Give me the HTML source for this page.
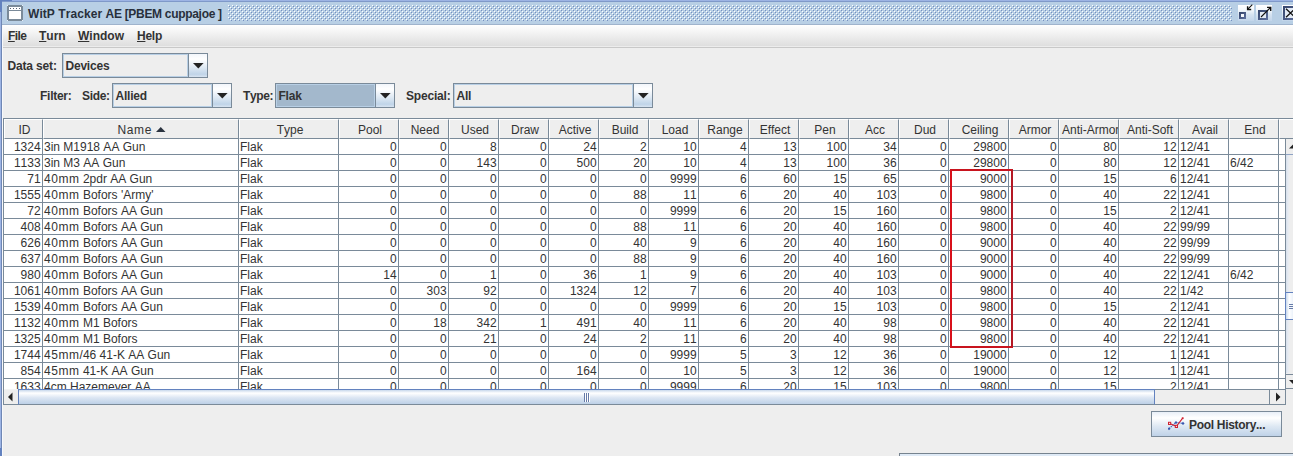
<!DOCTYPE html>
<html lang="en"><head><meta charset="utf-8"><title>WitP Tracker AE</title>
<style>
html,body{margin:0;padding:0}
body{font-kerning:none;width:1293px;height:456px;overflow:hidden;background:#eee;font-family:"Liberation Sans",sans-serif;font-size:12px;color:#333;position:relative}
#root{position:absolute;left:0;top:0;width:1293px;height:456px;overflow:hidden;background:#eee}
.abs{position:absolute}
b,.b{font-weight:bold}
/* frame border */
#bl{left:0;top:0;width:1px;height:456px;background:#9db4e4}
#bl2{left:1px;top:0;width:1px;height:456px;background:#6f87b5}
#bl3{left:2px;top:25px;width:1px;height:432px;background:#f8f9fb}
#bt{left:0;top:0;width:1293px;height:1px;background:#9db4e4}
#bt2{left:0;top:1px;width:1293px;height:1px;background:#7f99c9}
#ctl{left:0;top:0;width:2px;height:12px;background:#6382bf}
#ctl2{left:0;top:0;width:12px;height:1px;background:#6382bf}
#cbl{left:0;top:448px;width:2px;height:8px;background:#6382bf}
/* title bar */
#title{left:2px;top:2px;width:1291px;height:22px;background:#b8cfe5}
#titleline{left:2px;top:24px;width:1291px;height:1px;background:#9fb3cc}
#ttext{left:28px;top:6px;font-weight:bold;font-size:12px;color:#28303c;white-space:nowrap;line-height:16px}
#bumps{left:228px;top:5px;width:1004px;height:16px}
/* menubar */
#menubar{left:3px;top:25px;width:1290px;height:21px;background:linear-gradient(#fff,#dedede)}
#menuline{left:3px;top:46px;width:1290px;height:2px;background:linear-gradient(#ececec 50%,#c8c8c8 50%)}
.mi{top:28px;font-weight:bold;line-height:16px;white-space:nowrap}
.mi u{text-decoration:underline;text-underline-offset:1px}
.lbl{font-weight:bold;line-height:16px;white-space:nowrap}
/* combo */
.combo{box-sizing:border-box;border:1px solid #7a8a99;height:25px;background:#eee}
.combo .in{position:absolute;left:0;top:0;right:19px;bottom:0;border:1px solid #b8cfe5;box-sizing:border-box}
.combo .txt{position:absolute;left:2.500px;top:4px;font-weight:bold;line-height:16px;letter-spacing:-0.22px}
.combo .btn{position:absolute;right:0;top:0;width:19px;height:23px;border-left:1px solid #7a8a99;background:linear-gradient(#f2f6fb 0%,#fff 22%,#dde8f3 60%,#c0d4e8 88%,#d8e4f1 100%);box-sizing:border-box}
.combo .btn svg{position:absolute;left:4px;top:9px}
.combo.sel .in{background:#a3b8cc}
/* table */
#tbl{position:absolute;left:3px;top:118px;width:1290px;height:272px;overflow:hidden;border-left:1px solid #7a8a99;border-top:1px solid #7a8a99;box-sizing:border-box}
#thead{position:absolute;left:0;top:0;width:1290px;height:20px;background:#eee}
.th{position:absolute;top:0;height:20px;box-sizing:border-box;border-right:1px solid #7a8a99;border-bottom:1px solid #7a8a99;border-left:1px solid #fff;border-top:1px solid #fff;background:#eee;text-align:center;line-height:19px;white-space:nowrap;overflow:hidden;padding-left:2px}
.th span{position:relative;top:1px}
.mm{letter-spacing:0.55px}
.th .sort{margin-left:4.500px;position:relative;top:-1.500px}
#tbody{position:absolute;left:0;top:20px;width:1281px;height:251px;overflow:hidden;background:#fff}
.tr{position:absolute;left:0;width:1281px;height:16px;border-bottom:1px solid #7a8a99;box-sizing:border-box}
.td{position:absolute;top:0;height:16px;box-sizing:border-box;border-right:1px solid #7a8a99;border-bottom:1px solid #7a8a99;text-align:right;line-height:17px;white-space:nowrap;overflow:hidden;padding-right:1.400px}
.td.l{text-align:left;padding-left:1px}
#redbox{position:absolute;left:946px;top:30px;width:63px;height:179px;border:2px solid #c8141e;border-left-color:#d8101a;border-right-color:#b41824;box-sizing:border-box}
/* scrollbars */
#vsb{left:1285px;top:139px;width:8px;height:250px;background:#eee;border-left:1px solid #7a8a99;box-sizing:border-box}
#hsb{left:3px;top:389px;width:1283px;height:16px;background:#eee;border:1px solid #7a8a99;box-sizing:border-box}
.thumbh{background:linear-gradient(#c8d8ec 0%,#fff 22%,#dce6f3 55%,#bdd0e7 100%)}

</style></head>
<body>
<div id="root">
<div class="abs" id="title"></div>
<div class="abs" id="titleline"></div>
<div class="abs" id="bt"></div><div class="abs" id="bt2"></div>
<div class="abs" id="bl"></div><div class="abs" id="bl2"></div><div class="abs" id="bl3"></div>
<div class="abs" id="ctl"></div><div class="abs" id="ctl2"></div><div class="abs" id="cbl"></div>
<svg class="abs" id="ficon" style="left:7px;top:5px" width="16" height="16" viewBox="0 0 16 16">
<rect x="1" y="1" width="14" height="14" fill="#fff" stroke="#7a8a99" stroke-width="2"/>
<rect x="2" y="5" width="12" height="1" fill="#7a8a99"/>
<rect x="0" y="0" width="1" height="1" fill="#e6eef8"/><rect x="15" y="0" width="1" height="1" fill="#e6eef8"/><rect x="0" y="15" width="1" height="1" fill="#e6eef8"/><rect x="15" y="15" width="1" height="1" fill="#e6eef8"/>
<rect x="3" y="3" width="1" height="1" fill="#5a6578"/><rect x="6" y="3" width="1" height="1" fill="#5a6578"/><rect x="9" y="3" width="1" height="1" fill="#5a6578"/><rect x="12" y="3" width="1" height="1" fill="#5a6578"/>
</svg>
<div class="abs" id="ttext"><span style="letter-spacing:0.07px">WitP Tracker </span><span style="letter-spacing:-0.31px">AE [PBEM cuppajoe ]</span></div>
<svg class="abs" id="bumps" width="1004" height="16">
<defs><pattern id="bp" x="0" y="0" width="4" height="4" patternUnits="userSpaceOnUse">
<rect x="0" y="0" width="1" height="1" fill="#fff"/><rect x="2" y="2" width="1" height="1" fill="#fff"/>
<rect x="1" y="1" width="1" height="1" fill="#7690c0"/><rect x="3" y="3" width="1" height="1" fill="#7690c0"/>
</pattern></defs>
<rect width="1004" height="16" fill="url(#bp)"/></svg>
<!-- title buttons -->
<svg class="abs" style="left:1233px;top:0px" width="60" height="24" viewBox="1233 0 60 24">
<defs><linearGradient id="bg1" x1="0" y1="0" x2="0" y2="1"><stop offset="0" stop-color="#fff"/><stop offset="0.3" stop-color="#f4f8fc"/><stop offset="0.6" stop-color="#d6e3f1"/><stop offset="1" stop-color="#c2d5ea"/></linearGradient>
<linearGradient id="sq" x1="0" y1="0" x2="1" y2="1"><stop offset="0" stop-color="#38486f"/><stop offset="1" stop-color="#5a6c9a"/></linearGradient></defs>
<rect x="1238" y="5" width="16" height="16" fill="url(#bg1)"/>
<rect x="1240" y="13" width="5" height="5" fill="#f4f7fc" stroke="url(#sq)" stroke-width="2"/>
<path d="M1252.300 4.700 L1247.800 9.200" stroke="#111" stroke-width="1.100" fill="none"/><path d="M1247.600 6.200 V9.500 H1251.200" stroke="#111" stroke-width="1.400" fill="none"/>
<rect x="1256" y="5" width="16" height="16" fill="url(#bg1)"/>
<rect x="1259" y="11" width="8" height="8" fill="#e3ebf6" stroke="url(#sq)" stroke-width="2"/>
<path d="M1261 17 L1270.500 7.500" stroke="#111" stroke-width="1.100" fill="none"/><path d="M1267 7.400 H1270.700 V11" stroke="#111" stroke-width="1.400" fill="none"/>
<rect x="1282" y="5" width="16" height="16" fill="url(#bg1)"/>
<rect x="1284" y="7" width="13" height="12" fill="#e3ebf6" stroke="url(#sq)" stroke-width="2"/>
<path d="M1286 8.800 L1295 17.300 M1295 8.800 L1286 17.300" stroke="#111" stroke-width="1.300" fill="none"/>
</svg>
<div class="abs" id="menubar"></div><div class="abs" id="menuline"></div>
<div class="abs mi" style="left:8px;letter-spacing:-0.55px"><u>F</u>ile</div>
<div class="abs mi" style="left:39px"><u>T</u>urn</div>
<div class="abs mi" style="left:78px"><u>W</u>indow</div>
<div class="abs mi" style="left:137px;letter-spacing:-0.25px"><u>H</u>elp</div>
<div class="abs lbl" style="left:7.500px;top:58px;letter-spacing:-0.16px">Data set:</div>
<div class="abs combo" style="left:62px;top:53px;width:146px"><div class="in"></div><div class="txt">Devices</div><div class="btn"><svg width="11" height="6" viewBox="0 0 11 6"><polygon points="0,0 10.600,0 5.300,5.500" fill="#222"/></svg></div></div>
<div class="abs lbl" style="left:40px;top:88px;letter-spacing:-0.26px">Filter:</div>
<div class="abs lbl" style="left:82px;top:88px;letter-spacing:-0.34px">Side:</div>
<div class="abs combo" style="left:112px;top:83px;width:120px"><div class="in"></div><div class="txt">Allied</div><div class="btn"><svg width="11" height="6" viewBox="0 0 11 6"><polygon points="0,0 10.600,0 5.300,5.500" fill="#222"/></svg></div></div>
<div class="abs lbl" style="left:243px;top:88px;letter-spacing:-0.4px">Type:</div>
<div class="abs combo sel" style="left:275px;top:83px;width:120px"><div class="in"></div><div class="txt">Flak</div><div class="btn"><svg width="11" height="6" viewBox="0 0 11 6"><polygon points="0,0 10.600,0 5.300,5.500" fill="#222"/></svg></div></div>
<div class="abs lbl" style="left:406px;top:88px;letter-spacing:-0.19px">Special:</div>
<div class="abs combo" style="left:453px;top:83px;width:200px"><div class="in"></div><div class="txt">All</div><div class="btn"><svg width="11" height="6" viewBox="0 0 11 6"><polygon points="0,0 10.600,0 5.300,5.500" fill="#222"/></svg></div></div>
<div id="tbl">
<div id="thead"><div class="th" style="left:0px;width:39px"><span>ID</span></div><div class="th" style="left:39px;width:196px"><span style="letter-spacing:0.6px">Name</span><svg class="sort" width="10" height="5" viewBox="0 0 10 5"><polygon points="0,5 4.750,0 9.500,5" fill="#2a3340"/></svg></div><div class="th" style="left:235px;width:100px"><span>Type</span></div><div class="th" style="left:335px;width:60px"><span>Pool</span></div><div class="th" style="left:395px;width:50px"><span>Need</span></div><div class="th" style="left:445px;width:50px"><span>Used</span></div><div class="th" style="left:495px;width:50px"><span>Draw</span></div><div class="th" style="left:545px;width:50px"><span>Active</span></div><div class="th" style="left:595px;width:50px"><span>Build</span></div><div class="th" style="left:645px;width:50px"><span>Load</span></div><div class="th" style="left:695px;width:50px"><span>Range</span></div><div class="th" style="left:745px;width:50px"><span>Effect</span></div><div class="th" style="left:795px;width:50px"><span>Pen</span></div><div class="th" style="left:845px;width:50px"><span>Acc</span></div><div class="th" style="left:895px;width:50px"><span>Dud</span></div><div class="th" style="left:945px;width:60px"><span>Ceiling</span></div><div class="th" style="left:1005px;width:50px"><span>Armor</span></div><div class="th" style="left:1055px;width:60px"><span>Anti-Armor</span></div><div class="th" style="left:1115px;width:60px"><span>Anti-Soft</span></div><div class="th" style="left:1175px;width:50px"><span>Avail</span></div><div class="th" style="left:1225px;width:50px"><span>End</span></div><div class="th" style="left:1275px;width:20px;border-right:none"></div></div>
<div id="tbody">
<div class="tr" style="top:0px"><div class="td" style="left:0px;width:39px">1324</div><div class="td l" style="left:39px;width:196px">3in M1918 AA Gun</div><div class="td l" style="left:235px;width:100px">Flak</div><div class="td" style="left:335px;width:60px">0</div><div class="td" style="left:395px;width:50px">0</div><div class="td" style="left:445px;width:50px">8</div><div class="td" style="left:495px;width:50px">0</div><div class="td" style="left:545px;width:50px">24</div><div class="td" style="left:595px;width:50px">2</div><div class="td" style="left:645px;width:50px">10</div><div class="td" style="left:695px;width:50px">4</div><div class="td" style="left:745px;width:50px">13</div><div class="td" style="left:795px;width:50px">100</div><div class="td" style="left:845px;width:50px">34</div><div class="td" style="left:895px;width:50px">0</div><div class="td" style="left:945px;width:60px">29800</div><div class="td" style="left:1005px;width:50px">0</div><div class="td" style="left:1055px;width:60px">80</div><div class="td" style="left:1115px;width:60px">12</div><div class="td l" style="left:1175px;width:50px">12/41</div><div class="td l" style="left:1225px;width:50px"></div></div>
<div class="tr" style="top:16px"><div class="td" style="left:0px;width:39px">1133</div><div class="td l" style="left:39px;width:196px">3in M3 AA Gun</div><div class="td l" style="left:235px;width:100px">Flak</div><div class="td" style="left:335px;width:60px">0</div><div class="td" style="left:395px;width:50px">0</div><div class="td" style="left:445px;width:50px">143</div><div class="td" style="left:495px;width:50px">0</div><div class="td" style="left:545px;width:50px">500</div><div class="td" style="left:595px;width:50px">20</div><div class="td" style="left:645px;width:50px">10</div><div class="td" style="left:695px;width:50px">4</div><div class="td" style="left:745px;width:50px">13</div><div class="td" style="left:795px;width:50px">100</div><div class="td" style="left:845px;width:50px">36</div><div class="td" style="left:895px;width:50px">0</div><div class="td" style="left:945px;width:60px">29800</div><div class="td" style="left:1005px;width:50px">0</div><div class="td" style="left:1055px;width:60px">80</div><div class="td" style="left:1115px;width:60px">12</div><div class="td l" style="left:1175px;width:50px">12/41</div><div class="td l" style="left:1225px;width:50px">6/42</div></div>
<div class="tr" style="top:32px"><div class="td" style="left:0px;width:39px">71</div><div class="td l" style="left:39px;width:196px"><span class="mm">40mm</span> 2pdr AA Gun</div><div class="td l" style="left:235px;width:100px">Flak</div><div class="td" style="left:335px;width:60px">0</div><div class="td" style="left:395px;width:50px">0</div><div class="td" style="left:445px;width:50px">0</div><div class="td" style="left:495px;width:50px">0</div><div class="td" style="left:545px;width:50px">0</div><div class="td" style="left:595px;width:50px">0</div><div class="td" style="left:645px;width:50px">9999</div><div class="td" style="left:695px;width:50px">6</div><div class="td" style="left:745px;width:50px">60</div><div class="td" style="left:795px;width:50px">15</div><div class="td" style="left:845px;width:50px">65</div><div class="td" style="left:895px;width:50px">0</div><div class="td" style="left:945px;width:60px">9000</div><div class="td" style="left:1005px;width:50px">0</div><div class="td" style="left:1055px;width:60px">15</div><div class="td" style="left:1115px;width:60px">6</div><div class="td l" style="left:1175px;width:50px">12/41</div><div class="td l" style="left:1225px;width:50px"></div></div>
<div class="tr" style="top:48px"><div class="td" style="left:0px;width:39px">1555</div><div class="td l" style="left:39px;width:196px"><span class="mm">40mm</span> Bofors 'Army'</div><div class="td l" style="left:235px;width:100px">Flak</div><div class="td" style="left:335px;width:60px">0</div><div class="td" style="left:395px;width:50px">0</div><div class="td" style="left:445px;width:50px">0</div><div class="td" style="left:495px;width:50px">0</div><div class="td" style="left:545px;width:50px">0</div><div class="td" style="left:595px;width:50px">88</div><div class="td" style="left:645px;width:50px">11</div><div class="td" style="left:695px;width:50px">6</div><div class="td" style="left:745px;width:50px">20</div><div class="td" style="left:795px;width:50px">40</div><div class="td" style="left:845px;width:50px">103</div><div class="td" style="left:895px;width:50px">0</div><div class="td" style="left:945px;width:60px">9800</div><div class="td" style="left:1005px;width:50px">0</div><div class="td" style="left:1055px;width:60px">40</div><div class="td" style="left:1115px;width:60px">22</div><div class="td l" style="left:1175px;width:50px">12/41</div><div class="td l" style="left:1225px;width:50px"></div></div>
<div class="tr" style="top:64px"><div class="td" style="left:0px;width:39px">72</div><div class="td l" style="left:39px;width:196px"><span class="mm">40mm</span> Bofors AA Gun</div><div class="td l" style="left:235px;width:100px">Flak</div><div class="td" style="left:335px;width:60px">0</div><div class="td" style="left:395px;width:50px">0</div><div class="td" style="left:445px;width:50px">0</div><div class="td" style="left:495px;width:50px">0</div><div class="td" style="left:545px;width:50px">0</div><div class="td" style="left:595px;width:50px">0</div><div class="td" style="left:645px;width:50px">9999</div><div class="td" style="left:695px;width:50px">6</div><div class="td" style="left:745px;width:50px">20</div><div class="td" style="left:795px;width:50px">15</div><div class="td" style="left:845px;width:50px">160</div><div class="td" style="left:895px;width:50px">0</div><div class="td" style="left:945px;width:60px">9800</div><div class="td" style="left:1005px;width:50px">0</div><div class="td" style="left:1055px;width:60px">15</div><div class="td" style="left:1115px;width:60px">2</div><div class="td l" style="left:1175px;width:50px">12/41</div><div class="td l" style="left:1225px;width:50px"></div></div>
<div class="tr" style="top:80px"><div class="td" style="left:0px;width:39px">408</div><div class="td l" style="left:39px;width:196px"><span class="mm">40mm</span> Bofors AA Gun</div><div class="td l" style="left:235px;width:100px">Flak</div><div class="td" style="left:335px;width:60px">0</div><div class="td" style="left:395px;width:50px">0</div><div class="td" style="left:445px;width:50px">0</div><div class="td" style="left:495px;width:50px">0</div><div class="td" style="left:545px;width:50px">0</div><div class="td" style="left:595px;width:50px">88</div><div class="td" style="left:645px;width:50px">11</div><div class="td" style="left:695px;width:50px">6</div><div class="td" style="left:745px;width:50px">20</div><div class="td" style="left:795px;width:50px">40</div><div class="td" style="left:845px;width:50px">160</div><div class="td" style="left:895px;width:50px">0</div><div class="td" style="left:945px;width:60px">9800</div><div class="td" style="left:1005px;width:50px">0</div><div class="td" style="left:1055px;width:60px">40</div><div class="td" style="left:1115px;width:60px">22</div><div class="td l" style="left:1175px;width:50px">99/99</div><div class="td l" style="left:1225px;width:50px"></div></div>
<div class="tr" style="top:96px"><div class="td" style="left:0px;width:39px">626</div><div class="td l" style="left:39px;width:196px"><span class="mm">40mm</span> Bofors AA Gun</div><div class="td l" style="left:235px;width:100px">Flak</div><div class="td" style="left:335px;width:60px">0</div><div class="td" style="left:395px;width:50px">0</div><div class="td" style="left:445px;width:50px">0</div><div class="td" style="left:495px;width:50px">0</div><div class="td" style="left:545px;width:50px">0</div><div class="td" style="left:595px;width:50px">40</div><div class="td" style="left:645px;width:50px">9</div><div class="td" style="left:695px;width:50px">6</div><div class="td" style="left:745px;width:50px">20</div><div class="td" style="left:795px;width:50px">40</div><div class="td" style="left:845px;width:50px">160</div><div class="td" style="left:895px;width:50px">0</div><div class="td" style="left:945px;width:60px">9000</div><div class="td" style="left:1005px;width:50px">0</div><div class="td" style="left:1055px;width:60px">40</div><div class="td" style="left:1115px;width:60px">22</div><div class="td l" style="left:1175px;width:50px">99/99</div><div class="td l" style="left:1225px;width:50px"></div></div>
<div class="tr" style="top:112px"><div class="td" style="left:0px;width:39px">637</div><div class="td l" style="left:39px;width:196px"><span class="mm">40mm</span> Bofors AA Gun</div><div class="td l" style="left:235px;width:100px">Flak</div><div class="td" style="left:335px;width:60px">0</div><div class="td" style="left:395px;width:50px">0</div><div class="td" style="left:445px;width:50px">0</div><div class="td" style="left:495px;width:50px">0</div><div class="td" style="left:545px;width:50px">0</div><div class="td" style="left:595px;width:50px">88</div><div class="td" style="left:645px;width:50px">9</div><div class="td" style="left:695px;width:50px">6</div><div class="td" style="left:745px;width:50px">20</div><div class="td" style="left:795px;width:50px">40</div><div class="td" style="left:845px;width:50px">160</div><div class="td" style="left:895px;width:50px">0</div><div class="td" style="left:945px;width:60px">9000</div><div class="td" style="left:1005px;width:50px">0</div><div class="td" style="left:1055px;width:60px">40</div><div class="td" style="left:1115px;width:60px">22</div><div class="td l" style="left:1175px;width:50px">99/99</div><div class="td l" style="left:1225px;width:50px"></div></div>
<div class="tr" style="top:128px"><div class="td" style="left:0px;width:39px">980</div><div class="td l" style="left:39px;width:196px"><span class="mm">40mm</span> Bofors AA Gun</div><div class="td l" style="left:235px;width:100px">Flak</div><div class="td" style="left:335px;width:60px">14</div><div class="td" style="left:395px;width:50px">0</div><div class="td" style="left:445px;width:50px">1</div><div class="td" style="left:495px;width:50px">0</div><div class="td" style="left:545px;width:50px">36</div><div class="td" style="left:595px;width:50px">1</div><div class="td" style="left:645px;width:50px">9</div><div class="td" style="left:695px;width:50px">6</div><div class="td" style="left:745px;width:50px">20</div><div class="td" style="left:795px;width:50px">40</div><div class="td" style="left:845px;width:50px">103</div><div class="td" style="left:895px;width:50px">0</div><div class="td" style="left:945px;width:60px">9000</div><div class="td" style="left:1005px;width:50px">0</div><div class="td" style="left:1055px;width:60px">40</div><div class="td" style="left:1115px;width:60px">22</div><div class="td l" style="left:1175px;width:50px">12/41</div><div class="td l" style="left:1225px;width:50px">6/42</div></div>
<div class="tr" style="top:144px"><div class="td" style="left:0px;width:39px">1061</div><div class="td l" style="left:39px;width:196px"><span class="mm">40mm</span> Bofors AA Gun</div><div class="td l" style="left:235px;width:100px">Flak</div><div class="td" style="left:335px;width:60px">0</div><div class="td" style="left:395px;width:50px">303</div><div class="td" style="left:445px;width:50px">92</div><div class="td" style="left:495px;width:50px">0</div><div class="td" style="left:545px;width:50px">1324</div><div class="td" style="left:595px;width:50px">12</div><div class="td" style="left:645px;width:50px">7</div><div class="td" style="left:695px;width:50px">6</div><div class="td" style="left:745px;width:50px">20</div><div class="td" style="left:795px;width:50px">40</div><div class="td" style="left:845px;width:50px">103</div><div class="td" style="left:895px;width:50px">0</div><div class="td" style="left:945px;width:60px">9800</div><div class="td" style="left:1005px;width:50px">0</div><div class="td" style="left:1055px;width:60px">40</div><div class="td" style="left:1115px;width:60px">22</div><div class="td l" style="left:1175px;width:50px">1/42</div><div class="td l" style="left:1225px;width:50px"></div></div>
<div class="tr" style="top:160px"><div class="td" style="left:0px;width:39px">1539</div><div class="td l" style="left:39px;width:196px"><span class="mm">40mm</span> Bofors AA Gun</div><div class="td l" style="left:235px;width:100px">Flak</div><div class="td" style="left:335px;width:60px">0</div><div class="td" style="left:395px;width:50px">0</div><div class="td" style="left:445px;width:50px">0</div><div class="td" style="left:495px;width:50px">0</div><div class="td" style="left:545px;width:50px">0</div><div class="td" style="left:595px;width:50px">0</div><div class="td" style="left:645px;width:50px">9999</div><div class="td" style="left:695px;width:50px">6</div><div class="td" style="left:745px;width:50px">20</div><div class="td" style="left:795px;width:50px">15</div><div class="td" style="left:845px;width:50px">103</div><div class="td" style="left:895px;width:50px">0</div><div class="td" style="left:945px;width:60px">9800</div><div class="td" style="left:1005px;width:50px">0</div><div class="td" style="left:1055px;width:60px">15</div><div class="td" style="left:1115px;width:60px">2</div><div class="td l" style="left:1175px;width:50px">12/41</div><div class="td l" style="left:1225px;width:50px"></div></div>
<div class="tr" style="top:176px"><div class="td" style="left:0px;width:39px">1132</div><div class="td l" style="left:39px;width:196px"><span class="mm">40mm</span> M1 Bofors</div><div class="td l" style="left:235px;width:100px">Flak</div><div class="td" style="left:335px;width:60px">0</div><div class="td" style="left:395px;width:50px">18</div><div class="td" style="left:445px;width:50px">342</div><div class="td" style="left:495px;width:50px">1</div><div class="td" style="left:545px;width:50px">491</div><div class="td" style="left:595px;width:50px">40</div><div class="td" style="left:645px;width:50px">11</div><div class="td" style="left:695px;width:50px">6</div><div class="td" style="left:745px;width:50px">20</div><div class="td" style="left:795px;width:50px">40</div><div class="td" style="left:845px;width:50px">98</div><div class="td" style="left:895px;width:50px">0</div><div class="td" style="left:945px;width:60px">9800</div><div class="td" style="left:1005px;width:50px">0</div><div class="td" style="left:1055px;width:60px">40</div><div class="td" style="left:1115px;width:60px">22</div><div class="td l" style="left:1175px;width:50px">12/41</div><div class="td l" style="left:1225px;width:50px"></div></div>
<div class="tr" style="top:192px"><div class="td" style="left:0px;width:39px">1325</div><div class="td l" style="left:39px;width:196px"><span class="mm">40mm</span> M1 Bofors</div><div class="td l" style="left:235px;width:100px">Flak</div><div class="td" style="left:335px;width:60px">0</div><div class="td" style="left:395px;width:50px">0</div><div class="td" style="left:445px;width:50px">21</div><div class="td" style="left:495px;width:50px">0</div><div class="td" style="left:545px;width:50px">24</div><div class="td" style="left:595px;width:50px">2</div><div class="td" style="left:645px;width:50px">11</div><div class="td" style="left:695px;width:50px">6</div><div class="td" style="left:745px;width:50px">20</div><div class="td" style="left:795px;width:50px">40</div><div class="td" style="left:845px;width:50px">98</div><div class="td" style="left:895px;width:50px">0</div><div class="td" style="left:945px;width:60px">9800</div><div class="td" style="left:1005px;width:50px">0</div><div class="td" style="left:1055px;width:60px">40</div><div class="td" style="left:1115px;width:60px">22</div><div class="td l" style="left:1175px;width:50px">12/41</div><div class="td l" style="left:1225px;width:50px"></div></div>
<div class="tr" style="top:208px"><div class="td" style="left:0px;width:39px">1744</div><div class="td l" style="left:39px;width:196px"><span class="mm">45mm</span>/46 41-K AA Gun</div><div class="td l" style="left:235px;width:100px">Flak</div><div class="td" style="left:335px;width:60px">0</div><div class="td" style="left:395px;width:50px">0</div><div class="td" style="left:445px;width:50px">0</div><div class="td" style="left:495px;width:50px">0</div><div class="td" style="left:545px;width:50px">0</div><div class="td" style="left:595px;width:50px">0</div><div class="td" style="left:645px;width:50px">9999</div><div class="td" style="left:695px;width:50px">5</div><div class="td" style="left:745px;width:50px">3</div><div class="td" style="left:795px;width:50px">12</div><div class="td" style="left:845px;width:50px">36</div><div class="td" style="left:895px;width:50px">0</div><div class="td" style="left:945px;width:60px">19000</div><div class="td" style="left:1005px;width:50px">0</div><div class="td" style="left:1055px;width:60px">12</div><div class="td" style="left:1115px;width:60px">1</div><div class="td l" style="left:1175px;width:50px">12/41</div><div class="td l" style="left:1225px;width:50px"></div></div>
<div class="tr" style="top:224px"><div class="td" style="left:0px;width:39px">854</div><div class="td l" style="left:39px;width:196px"><span class="mm">45mm</span> 41-K AA Gun</div><div class="td l" style="left:235px;width:100px">Flak</div><div class="td" style="left:335px;width:60px">0</div><div class="td" style="left:395px;width:50px">0</div><div class="td" style="left:445px;width:50px">0</div><div class="td" style="left:495px;width:50px">0</div><div class="td" style="left:545px;width:50px">164</div><div class="td" style="left:595px;width:50px">0</div><div class="td" style="left:645px;width:50px">10</div><div class="td" style="left:695px;width:50px">5</div><div class="td" style="left:745px;width:50px">3</div><div class="td" style="left:795px;width:50px">12</div><div class="td" style="left:845px;width:50px">36</div><div class="td" style="left:895px;width:50px">0</div><div class="td" style="left:945px;width:60px">19000</div><div class="td" style="left:1005px;width:50px">0</div><div class="td" style="left:1055px;width:60px">12</div><div class="td" style="left:1115px;width:60px">1</div><div class="td l" style="left:1175px;width:50px">12/41</div><div class="td l" style="left:1225px;width:50px"></div></div>
<div class="tr" style="top:240px"><div class="td" style="left:0px;width:39px">1633</div><div class="td l" style="left:39px;width:196px">4cm Hazemeyer AA</div><div class="td l" style="left:235px;width:100px">Flak</div><div class="td" style="left:335px;width:60px">0</div><div class="td" style="left:395px;width:50px">0</div><div class="td" style="left:445px;width:50px">0</div><div class="td" style="left:495px;width:50px">0</div><div class="td" style="left:545px;width:50px">0</div><div class="td" style="left:595px;width:50px">0</div><div class="td" style="left:645px;width:50px">9999</div><div class="td" style="left:695px;width:50px">6</div><div class="td" style="left:745px;width:50px">20</div><div class="td" style="left:795px;width:50px">15</div><div class="td" style="left:845px;width:50px">103</div><div class="td" style="left:895px;width:50px">0</div><div class="td" style="left:945px;width:60px">9800</div><div class="td" style="left:1005px;width:50px">0</div><div class="td" style="left:1055px;width:60px">15</div><div class="td" style="left:1115px;width:60px">2</div><div class="td l" style="left:1175px;width:50px">12/41</div><div class="td l" style="left:1225px;width:50px"></div></div>
<div id="redbox"></div>
</div>
<!-- vertical scrollbar -->
</div>
<div class="abs" id="vsb">
 <div class="abs" style="left:0;top:0;width:8px;height:15px;background:#eee;border-bottom:1px solid #8fa3c4"></div>
 <svg class="abs" style="left:0;top:0" width="8" height="16" viewBox="0 0 8 16"><polygon points="3,9.500 8,4.500 8,9.500" fill="#222"/></svg>
 <div class="abs" style="left:0;top:16px;width:8px;height:218px;background:linear-gradient(90deg,#d5dfec 0,#e6ebf2 2px,#eee 4px)"></div>
 <div class="abs" style="left:-1px;top:153px;width:9px;height:28px;box-sizing:border-box;border:1px solid #6382bf;border-right:none;background:linear-gradient(90deg,#c8d8ec 0%,#fff 40%,#e6eef8 100%)"></div>
 <div class="abs" style="left:3px;top:165px;width:5px;height:1px;background:#667ba8"></div>
 <div class="abs" style="left:3px;top:167px;width:5px;height:1px;background:#667ba8"></div>
 <div class="abs" style="left:3px;top:169px;width:5px;height:1px;background:#667ba8"></div>
 <div class="abs" style="left:0;top:235px;width:8px;height:13px;background:#eee;border-top:1px solid #7a8a99;border-bottom:1px solid #7a8a99"></div>
 <svg class="abs" style="left:0;top:235px" width="8" height="15" viewBox="0 0 8 15"><polygon points="3,6 8,6 8,11" fill="#222"/></svg>
</div>
<!-- horizontal scrollbar -->
<div class="abs" id="hsb">
 <div class="abs" style="left:0;top:-1px;width:14px;height:1px;background:#f4f4f4"></div>
 <svg class="abs" style="left:0;top:0" width="15" height="14" viewBox="0 0 15 14"><polygon points="4,7 8.500,2.500 8.500,11.500" fill="#222"/></svg>
 <div class="abs thumbh" style="left:14px;top:-1px;width:1137px;height:16px;box-sizing:border-box;border:1px solid #6382bf;border-bottom-color:#7a8a99"></div>
 <div class="abs" style="left:580px;top:3px;width:1px;height:9px;background:#667ba8;box-shadow:1px 0 0 #fff"></div>
 <div class="abs" style="left:582px;top:3px;width:1px;height:9px;background:#667ba8;box-shadow:1px 0 0 #fff"></div>
 <div class="abs" style="left:584px;top:3px;width:1px;height:9px;background:#667ba8;box-shadow:1px 0 0 #fff"></div>
 <div class="abs" style="left:1265px;top:0;width:16px;height:14px;box-sizing:border-box;border-left:1px solid #7a8a99;background:#eee"></div>
 <svg class="abs" style="left:1266px;top:0" width="15" height="14" viewBox="0 0 15 14"><polygon points="6,2.500 10.500,7 6,11.500" fill="#222"/></svg>
</div>
<div class="abs" id="pbtn" style="left:1151px;top:411px;width:131px;height:26px;box-sizing:border-box;border:1px solid #7a8a99;background:linear-gradient(#e8eff8 0%,#fff 25%,#dde8f3 60%,#bfd2e8 100%)">
<svg class="abs" style="left:16px;top:4px" width="17" height="16" viewBox="1168 416 17 16">
<path d="M1169 428.700 L1176 422.500 L1183 423.400" stroke="#4060b8" stroke-width="1.100" fill="none" stroke-dasharray="1.500 0.800"/>
<path d="M1169.600 423.400 L1176.400 426.300 L1182.700 418.200" stroke="#d02030" stroke-width="1.100" fill="none"/>
<rect x="1168.500" y="422.300" width="2.200" height="2.200" fill="#f6dede" stroke="#d02030" stroke-width="1"/>
<rect x="1175.300" y="425.300" width="2.200" height="2.200" fill="#f6dede" stroke="#d02030" stroke-width="1"/>
<rect x="1181.800" y="417.300" width="1.800" height="1.800" fill="#d02030"/>
<rect x="1167.900" y="427.600" width="2.200" height="2.200" fill="#3858b0" transform="rotate(45 1169 428.700)"/>
<rect x="1174.900" y="421.400" width="2.200" height="2.200" fill="#3858b0" transform="rotate(45 1176 422.500)"/>
<rect x="1181.900" y="422.300" width="2.200" height="2.200" fill="#3858b0" transform="rotate(45 1183 423.400)"/>
</svg>
<span class="abs lbl" style="left:37px;top:5px;letter-spacing:-0.3px">Pool History...</span></div>
<div class="abs" style="left:899px;top:453px;width:400px;height:10px;box-sizing:border-box;border:1px solid #76838f;background:#dfeaf6"></div>
</div>
</body></html>
